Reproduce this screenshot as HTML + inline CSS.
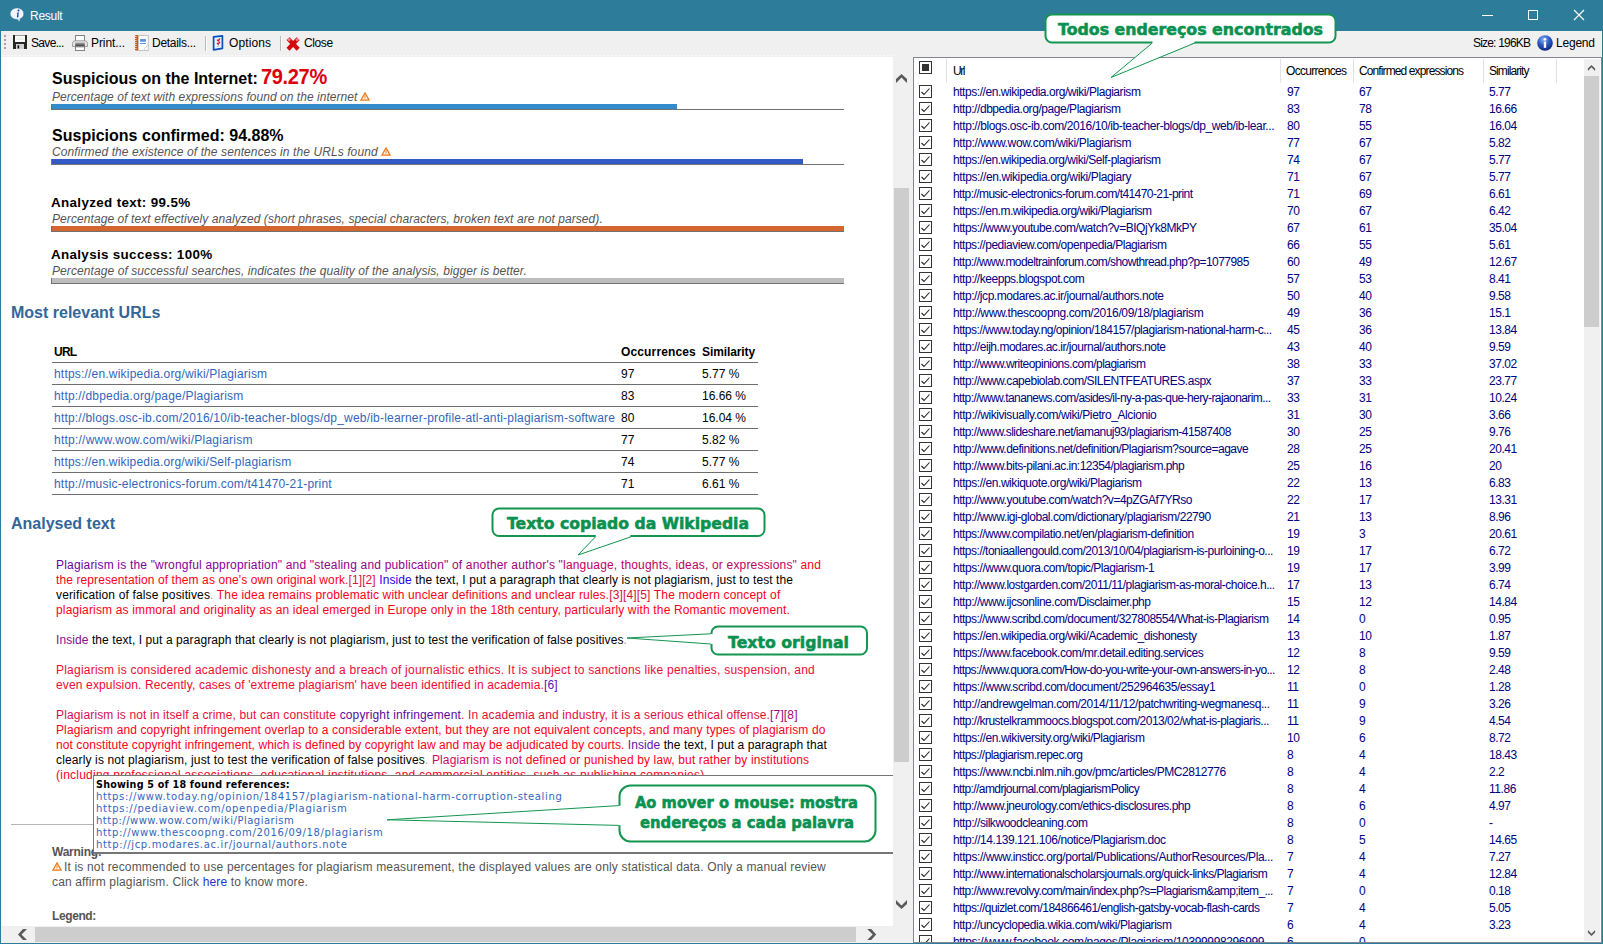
<!DOCTYPE html>
<html lang="en"><head><meta charset="utf-8"><title>Result</title>
<style>
html,body{margin:0;padding:0;background:#F0F0F0;}
body{width:1603px;height:944px;overflow:hidden;font-family:"Liberation Sans",sans-serif;}
#win{position:relative;width:1603px;height:944px;background:#F0F0F0;overflow:hidden;}
#win div,#win span{box-sizing:border-box;}
.abs{position:absolute;}
/* title bar */
#title{position:absolute;left:0;top:0;width:1603px;height:31px;background:#2D7D9A;}
#title .cap{position:absolute;left:30px;top:8px;font-size:12px;line-height:16px;color:#fff;white-space:nowrap;}
#bl{position:absolute;left:0;top:31px;width:1px;height:913px;background:#2D7D9A;}
#br{position:absolute;left:1602px;top:31px;width:1px;height:913px;background:#2D7D9A;}
#bb{position:absolute;left:0;top:943px;width:1603px;height:1px;background:#2D7D9A;}
/* toolbar */
#tb{position:absolute;left:1px;top:31px;width:1601px;height:26px;background:#F0F0F0;}
#tb .tx{position:absolute;top:4px;font-size:12px;line-height:16px;color:#000;white-space:nowrap;}
#tb .sep{position:absolute;top:5px;width:1px;height:15px;background:#B9B9B9;box-shadow:1px 1px 0 #FCFCFC;}
#tb svg{position:absolute;}
/* left panel */
#lp{position:absolute;left:1px;top:57px;width:892px;height:869px;background:#fff;overflow:hidden;}
#lp .t{position:absolute;white-space:nowrap;}
.h1{font-weight:bold;font-size:16px;line-height:20px;color:#000;}
.h2{font-weight:bold;font-size:13.4px;line-height:18px;color:#000;}
.sub{font-style:italic;font-size:12px;line-height:14px;color:#555;}
.bar{position:absolute;left:50px;width:793px;height:6px;border-left:1px solid #727272;border-bottom:1px solid #727272;}
.bar i{display:block;height:5px;}
.sec{font-weight:bold;font-size:16px;line-height:20px;color:#336699;}
#ut{position:absolute;left:51px;top:284px;width:706px;}
#ut .row{position:absolute;left:0;width:706px;height:22px;border-bottom:1px solid #6E6E6E;font-size:12px;line-height:14px;white-space:nowrap;}
#ut .row > span{position:absolute;top:4px;}
#ut .hd{font-weight:bold;}
#ut .lk{color:#3366BB;}
.p{position:absolute;left:55px;font-size:12px;line-height:15px;white-space:nowrap;color:#000;}
.p div{height:15px;}
.warn{color:#555;font-size:12px;line-height:15px;}
/* scrollbars */
#vsb{position:absolute;left:893px;top:57px;width:20px;height:869px;background:#F0F0F0;}
#vsb .th{position:absolute;left:1px;top:131px;width:15px;height:574px;background:#CDCDCD;}
#hsb{position:absolute;left:1px;top:926px;width:892px;height:17px;background:#F0F0F0;}
#hsb .th{position:absolute;left:34px;top:1px;width:821px;height:15px;background:#CDCDCD;}
#corner{position:absolute;left:893px;top:926px;width:20px;height:17px;background:#F0F0F0;}
/* tooltip */
#tip{position:absolute;left:92px;top:718px;width:800px;height:79px;background:#fff;border-top:1px solid #767676;border-left:1px solid #767676;border-bottom:2px solid #767676;font-family:"DejaVu Sans","Liberation Sans",sans-serif;font-size:10px;line-height:12px;white-space:nowrap;}
#tip div{position:absolute;left:2px;}
#tip .b{font-weight:bold;color:#000;font-size:9.6px;}
#tip .l{color:#3366BB;}
/* right panel */
#rp{position:absolute;left:913px;top:57px;width:689px;height:886px;background:#fff;border:1px solid #828790;overflow:hidden;font-size:12px;}
#rhead{position:absolute;left:0;top:0;width:671px;height:25px;}
#rhead .hcb{position:absolute;left:5px;top:3px;width:13px;height:13px;border:1px solid #333;background:#fff;}
#rhead .hcb i{position:absolute;left:2px;top:2px;width:7px;height:7px;background:#333;}
#rhead .hs{position:absolute;top:1px;width:1px;height:24px;background:#E2E2E2;}
#rhead .ht{position:absolute;top:6px;line-height:14px;color:#000;white-space:nowrap;letter-spacing:-0.45px;}
#rows{position:absolute;left:0;top:25px;width:671px;}
.r{position:relative;height:17px;line-height:17px;white-space:nowrap;color:#000080;letter-spacing:-0.45px;}
.r > span{position:absolute;top:1px;}
.r .cb{left:5px;top:2px;width:13px;height:13px;border:1px solid #333;background:#fff;}
.r .cb svg{position:absolute;left:-1px;top:-1px;}
.r .u{left:39px;}
.r .a{left:373px;}
.r .b{left:445px;}
.r .c{left:575px;}
#rsb{position:absolute;left:670px;top:1px;width:16px;height:882px;background:#F0F0F0;}
#rthumb{position:absolute;left:0;top:17px;width:15px;height:251px;background:#CDCDCD;}
#rsb svg{position:absolute;left:0;top:0;}
/* callouts */
.co{position:absolute;left:0;top:0;}
.cot{position:absolute;font-family:"DejaVu Sans","Liberation Sans",sans-serif;font-weight:bold;color:#0A9150;white-space:nowrap;text-align:center;}

</style></head>
<body>
<div id="win">
<div id="title">
<svg class="abs" style="left:9px;top:7px" width="16" height="16" viewBox="0 0 16 16"><path d="M7.5 11.6 L10.4 14.6 L11.4 10.4 Z" fill="#E2EEF9"/><ellipse cx="8" cy="6.7" rx="6.7" ry="5.6" fill="#EEF5FC" stroke="#3A6FA8" stroke-width="0.5" stroke-dasharray="1 1"/><circle cx="9.5" cy="3.5" r="0.95" fill="#1038B0"/><path d="M7.6 5.9 L9.7 5.2 L9.3 10.2 L7.9 10.5 L8.4 6.6 Z" fill="#1038B0"/></svg>
<div class="cap"><span style="letter-spacing:-0.283px">Result</span></div>
<svg class="abs" style="left:1472px;top:0" width="131" height="31" viewBox="0 0 131 31"><path d="M10 15.5 H21" stroke="#fff" stroke-width="1"/><rect x="56.5" y="10.5" width="9" height="9" fill="none" stroke="#fff" stroke-width="1"/><path d="M102 10 L112 20 M112 10 L102 20" stroke="#fff" stroke-width="1.1"/></svg>
</div>
<div id="bl"></div><div id="br"></div>
<div id="tb">
<div class="abs" style="left:0;top:24px;width:892px;height:1px;background:repeating-linear-gradient(90deg,#F0F0F0 0,#F0F0F0 2px,#FAFAFA 2px,#FAFAFA 4px)"></div>
<svg style="left:3px;top:4px" width="3" height="15" viewBox="0 0 3 15"><rect x="0" y="0" width="2" height="2" fill="#A4A4A4"/><rect x="0" y="4" width="2" height="2" fill="#A4A4A4"/><rect x="0" y="8" width="2" height="2" fill="#A4A4A4"/><rect x="0" y="12" width="2" height="2" fill="#A4A4A4"/></svg>
<svg style="left:12px;top:4px" width="14" height="14" viewBox="0 0 14 14"><rect x="0" y="0" width="14" height="14" fill="#262626"/><rect x="2" y="0" width="10" height="1" fill="#9C9C9C"/><rect x="2" y="1" width="10" height="6" fill="#F7FAF7"/><rect x="3.5" y="3.5" width="7" height="1" fill="#DCE8DC"/><rect x="3" y="9" width="8" height="5" fill="#D2D2D2"/><rect x="4.5" y="10.3" width="1.7" height="3.2" fill="#111"/></svg>
<div class="tx" style="left:30px"><span style="letter-spacing:-0.677px">Save...</span></div>
<svg style="left:71px;top:4px" width="16" height="16" viewBox="0 0 16 16"><defs><linearGradient id="pg" x1="0" y1="0" x2="0" y2="1"><stop offset="0" stop-color="#B8B8B8"/><stop offset="0.5" stop-color="#707070"/><stop offset="1" stop-color="#3C3C3C"/></linearGradient></defs><rect x="3.5" y="0.5" width="9" height="6.5" fill="#FBFBFB" stroke="#828282" stroke-width="1"/><path d="M2.5 5.8 H13.5 Q15.5 6.2 15.5 8.5 V11.5 H0.5 V8.5 Q0.5 6.2 2.5 5.8 Z" fill="#E6E6E6" stroke="#8C8C8C" stroke-width="0.8"/><rect x="3.2" y="7.4" width="9.6" height="4" fill="url(#pg)"/><rect x="3.5" y="11.8" width="9" height="3.7" fill="#FDFDFD" stroke="#828282" stroke-width="1"/></svg>
<div class="tx" style="left:90px"><span style="letter-spacing:-0.070px">Print...</span></div>
<svg style="left:132px;top:4px" width="16" height="16" viewBox="0 0 16 16"><rect x="5" y="0.5" width="10.3" height="15" fill="#fff" stroke="#C2C2C2" stroke-width="1"/><path d="M15.3 9 L10.5 15.5" stroke="#CDCDCD" stroke-width="1"/><rect x="2" y="0" width="3.2" height="15.6" rx="0.8" fill="#C2571F"/><path d="M0.6 1.5 H3.6 M0.6 3.5 H3.6 M0.6 5.5 H3.6 M0.6 7.5 H3.6 M0.6 9.5 H3.6 M0.6 11.5 H3.6 M0.6 13.5 H3.6" stroke="#EBE3DC" stroke-width="0.9"/><rect x="7" y="4" width="6" height="2.8" rx="0.5" fill="#5B96E0"/><rect x="7" y="8" width="6" height="1" fill="#5B96E0"/></svg>
<div class="tx" style="left:151px"><span style="letter-spacing:-0.288px">Details...</span></div>
<div class="sep" style="left:204px"></div>
<svg style="left:211px;top:4px" width="12" height="16" viewBox="0 0 12 16"><path d="M1.6 1.9 L10.4 0.9 L10.4 13.4 L1.6 14.9 Z" fill="#EAF5FF" stroke="#0F4CBC" stroke-width="1.7" stroke-linejoin="round"/><path d="M4.9 4.6 L6.2 5.9 L8 3.3 M4.9 7.9 L6.2 9.2 L8 6.6" fill="none" stroke="#D41034" stroke-width="1.3"/><path d="M5 11.4 L7.6 10.9" stroke="#9FB8D8" stroke-width="1"/></svg>
<div class="tx" style="left:228px"><span style="letter-spacing:0.107px">Options</span></div>
<div class="sep" style="left:279px"></div>
<svg style="left:284px;top:5px" width="16" height="16" viewBox="0 0 16 16"><path d="M3 2.6 L13.2 13.2 M13.2 2.6 L3 13.2" stroke="#D40A0A" stroke-width="4.2" stroke-linecap="butt"/><path d="M3 2.6 L5 4.6 M13.2 2.6 L11.2 4.6" stroke="#F08A96" stroke-width="2.4"/></svg>
<div class="tx" style="left:303px"><span style="letter-spacing:-0.397px">Close</span></div>
<div class="tx" style="left:1472px"><span style="letter-spacing:-0.805px">Size: 196KB</span></div>
<svg style="left:1536px;top:4px" width="16" height="16" viewBox="0 0 16 16"><defs><radialGradient id="ig" cx="0.42" cy="0.28" r="0.8"><stop offset="0" stop-color="#8FB4F4"/><stop offset="0.45" stop-color="#2C5CC8"/><stop offset="1" stop-color="#061C6C"/></radialGradient></defs><circle cx="8" cy="8" r="7.8" fill="url(#ig)"/><circle cx="8" cy="4.3" r="1.35" fill="#fff"/><rect x="6.8" y="6.6" width="2.4" height="6.2" fill="#fff"/></svg>
<div class="tx" style="left:1555px"><span style="letter-spacing:-0.209px">Legend</span></div>
</div>

<div id="lp">
<div class="t h1" style="left:51px;top:12px"><span style="letter-spacing:-0.017px">Suspicious on the Internet:</span></div>
<div class="t h1" style="left:260px;top:8px;font-size:20px;line-height:24px;color:#DD0011;transform:scaleY(1.07);transform-origin:0 19px"><span style="letter-spacing:-0.329px">79.27%</span></div>
<div class="t sub" style="left:51px;top:33px"><span style="letter-spacing:0.045px">Percentage of text with expressions found on the internet</span><svg width="10" height="9" viewBox="0 0 11 10" style="vertical-align:0px;margin-left:3px"><path d="M5.5 1 L10 9 H1 Z" fill="#FFF4E0" stroke="#F07818" stroke-width="1.3"/><rect x="5" y="3.6" width="1" height="3" fill="#F07818"/><rect x="5" y="7.2" width="1" height="1" fill="#F07818"/></svg></div>
<div class="bar" style="top:47px"><i style="width:625px;background:#338ACC"></i></div>
<div class="t h1" style="left:51px;top:69px"><span style="letter-spacing:0.015px">Suspicions confirmed: 94.88%</span></div>
<div class="t sub" style="left:51px;top:88px"><span style="letter-spacing:0.095px">Confirmed the existence of the sentences in the URLs found</span><svg width="10" height="9" viewBox="0 0 11 10" style="vertical-align:0px;margin-left:3px"><path d="M5.5 1 L10 9 H1 Z" fill="#FFF4E0" stroke="#F07818" stroke-width="1.3"/><rect x="5" y="3.6" width="1" height="3" fill="#F07818"/><rect x="5" y="7.2" width="1" height="1" fill="#F07818"/></svg></div>
<div class="bar" style="top:102px"><i style="width:751px;background:#3359C8"></i></div>
<div class="t h2" style="left:50px;top:137px"><span style="letter-spacing:0.349px">Analyzed text: 99.5%</span></div>
<div class="t sub" style="left:51px;top:155px"><span style="letter-spacing:0.076px">Percentage of text effectively analyzed (short phrases, special characters, broken text are not parsed).</span></div>
<div class="bar" style="top:169px"><i style="width:792px;background:#D4652F"></i></div>
<div class="t h2" style="left:50px;top:189px"><span style="letter-spacing:0.334px">Analysis success: 100%</span></div>
<div class="t sub" style="left:51px;top:207px"><span style="letter-spacing:0.085px">Percentage of successful searches, indicates the quality of the analysis, bigger is better.</span></div>
<div class="bar" style="top:221px"><i style="width:792px;background:#BDBDBD"></i></div>
<div class="t sec" style="left:10px;top:246px">Most relevant URLs</div>
<div id="ut">
<div class="row hd" style="top:0"><span style="left:2px"><span style="letter-spacing:-0.736px">URL</span></span><span style="left:569px"><span style="letter-spacing:0.141px">Occurrences</span></span><span style="left:650px"><span style="letter-spacing:-0.103px">Similarity</span></span></div>
<div class="row" style="top:22px"><span class="lk" style="left:2px"><span style="letter-spacing:0.197px">https://en.wikipedia.org/wiki/Plagiarism</span></span><span style="left:569px">97</span><span style="left:650px">5.77 %</span></div>
<div class="row" style="top:44px"><span class="lk" style="left:2px"><span style="letter-spacing:0.197px">http://dbpedia.org/page/Plagiarism</span></span><span style="left:569px">83</span><span style="left:650px">16.66 %</span></div>
<div class="row" style="top:66px"><span class="lk" style="left:2px"><span style="letter-spacing:0.203px">http://blogs.osc-ib.com/2016/10/ib-teacher-blogs/dp_web/ib-learner-profile-atl-anti-plagiarism-software</span></span><span style="left:569px">80</span><span style="left:650px">16.04 %</span></div>
<div class="row" style="top:88px"><span class="lk" style="left:2px"><span style="letter-spacing:0.233px">http://www.wow.com/wiki/Plagiarism</span></span><span style="left:569px">77</span><span style="left:650px">5.82 %</span></div>
<div class="row" style="top:110px"><span class="lk" style="left:2px"><span style="letter-spacing:0.192px">https://en.wikipedia.org/wiki/Self-plagiarism</span></span><span style="left:569px">74</span><span style="left:650px">5.77 %</span></div>
<div class="row" style="top:132px"><span class="lk" style="left:2px"><span style="letter-spacing:0.194px">http://music-electronics-forum.com/t41470-21-print</span></span><span style="left:569px">71</span><span style="left:650px">6.61 %</span></div>
</div>
<div class="t sec" style="left:10px;top:457px">Analysed text</div>
<div class="p" style="top:501px">
<div><span style="letter-spacing:0.180px"><span style="color:#7200A4">Plagiarism</span> <span style="color:#7E00A0">is the</span> <span style="color:#8A0096">"wrongful appropriation"</span> <span style="color:#96008A">and "stealing and publication"</span> <span style="color:#A2007C">of another author's</span> <span style="color:#BE0060">"language, thoughts, ideas, or expressions"</span> <span style="color:#FF0018">and</span></span></div>
<div><span style="letter-spacing:0.100px"><span style="color:#FF0018">the representation of them as one's own original work.</span><span style="color:#D8143C">[1][2]</span> <span style="color:#2A00EE">Inside</span> the text, I put a paragraph that clearly is not plagiarism, just to test the</span></div>
<div><span style="letter-spacing:0.150px">verification of false positives<span style="color:#D08888">.</span> <span style="color:#FF0018">The idea remains problematic with unclear definitions and unclear rules.</span><span style="color:#D0143C">[3][4][5]</span> <span style="color:#FF0018">The modern concept of</span></span></div>
<div><span style="letter-spacing:0.154px"><span style="color:#FF0018">plagiarism as immoral and originality as an ideal emerged in Europe only in the 18th century, particularly with the Romantic movement.</span></span></div>
</div>
<div class="p" style="top:576px">
<div><span style="letter-spacing:0.080px"><span style="color:#8A0A8A">Inside</span> the text, I put a paragraph that clearly is not plagiarism, just to test the verification of false positives<span style="color:#D08888">.</span></span></div>
</div>
<div class="p" style="top:606px">
<div><span style="letter-spacing:0.223px"><span style="color:#EE0C34">Plagiarism is considered academic dishonesty and a breach of journalistic ethics. It is subject to sanctions like penalties, suspension, and</span></span></div>
<div><span style="letter-spacing:0.142px"><span style="color:#F00830">even expulsion. Recently, cases of 'extreme plagiarism' have been identified in academia.</span><span style="color:#5A10B4">[6]</span></span></div>
</div>
<div class="p" style="top:651px">
<div><span style="letter-spacing:0.146px"><span style="color:#D21050">Plagiarism is</span> <span style="color:#EC0C38">not in itself a crime, but can constitute</span> <span style="color:#5A0AA0">copyright infringement</span><span style="color:#E0103C">. In academia and industry, it is a serious ethical offense.</span><span style="color:#9A0A78">[7][8]</span></span></div>
<div><span style="letter-spacing:0.116px"><span style="color:#FF0018">Plagiarism and copyright infringement overlap to a considerable extent, but they are not equivalent concepts, and many types of plagiarism do</span></span></div>
<div><span style="letter-spacing:0.076px"><span style="color:#FF0018">not constitute copyright infringement, which is defined by copyright law and may be adjudicated by courts.</span> <span style="color:#6A10B0">Inside</span> the text, I put a paragraph that</span></div>
<div><span style="letter-spacing:0.135px">clearly is not plagiarism, just to test the verification of false positives<span style="color:#D08888">.</span> <span style="color:#CC0A66">Plagiarism is not</span> <span style="color:#FF0018">defined or punished by law, but rather by institutions</span></span></div>
<div><span style="letter-spacing:0.238px"><span style="color:#FF0018">(including professional associations, educational institutions, and commercial entities, such as publishing companies).</span></span></div>
</div>
<div class="abs" style="left:10px;top:767px;width:840px;height:1px;background:#B4B4B4"></div>
<div class="t warn" style="left:51px;top:788px;font-weight:bold"><span style="letter-spacing:-0.250px">Warning:</span></div>
<div class="t warn" style="left:51px;top:803px"><svg width="10" height="9" viewBox="0 0 11 10" style="vertical-align:0px"><path d="M5.5 1 L10 9 H1 Z" fill="#FFF4E0" stroke="#F07818" stroke-width="1.3"/><rect x="5" y="3.6" width="1" height="3" fill="#F07818"/><rect x="5" y="7.2" width="1" height="1" fill="#F07818"/></svg><span style="position:absolute;left:12px;top:0"><span style="letter-spacing:0.167px">It is not recommended to use percentages for plagiarism measurement, the displayed values are only statistical data. Only a manual review</span></span></div>
<div class="t warn" style="left:51px;top:818px"><span style="letter-spacing:0.143px">can affirm plagiarism. Click <span style="color:#2233CC">here</span> to know more.</span></div>
<div class="t warn" style="left:51px;top:852px;font-weight:bold"><span style="letter-spacing:-0.395px">Legend:</span></div>
<div id="tip">
<div class="b" style="top:3px"><span style="letter-spacing:0.219px">Showing 5 of 18 found references:</span></div>
<div class="l" style="top:15px"><span style="letter-spacing:0.640px">https://www.today.ng/opinion/184157/plagiarism-national-harm-corruption-stealing</span></div>
<div class="l" style="top:27px"><span style="letter-spacing:0.709px">https://pediaview.com/openpedia/Plagiarism</span></div>
<div class="l" style="top:39px"><span style="letter-spacing:0.484px">http://www.wow.com/wiki/Plagiarism</span></div>
<div class="l" style="top:51px"><span style="letter-spacing:0.644px">http://www.thescoopng.com/2016/09/18/plagiarism</span></div>
<div class="l" style="top:63px"><span style="letter-spacing:0.656px">http://jcp.modares.ac.ir/journal/authors.note</span></div>
</div>
</div>
<div id="vsb"><div class="th"></div><svg class="abs" style="left:0;top:0" width="20" height="869" viewBox="0 0 20 869"><path d="M8.5 17 L14 22 L14 26 L8.5 20.5 L3 26 L3 22 Z M8.5 852 L14 847 L14 843 L8.5 848.5 L3 843 L3 847 Z" fill="#5A5A5A"/></svg></div>
<div id="hsb"><div class="th"></div><svg class="abs" style="left:0;top:0" width="892" height="17" viewBox="0 0 892 17"><path d="M17 8.5 L22 3 L26 3 L20.5 8.5 L26 14 L22 14 Z M875.2 8.5 L870.2 3 L866.2 3 L871.7 8.5 L866.2 14 L870.2 14 Z" fill="#5A5A5A"/></svg></div>
<div id="corner"></div>

<div id="rp">
<div id="rhead"><span class="hcb"><i></i></span><span class="hs" style="left:32px"></span><span class="hs" style="left:366px"></span><span class="hs" style="left:439px"></span><span class="hs" style="left:569px"></span><span class="hs" style="left:642px"></span><span class="ht" style="left:39px"><span style="letter-spacing:-1.414px">Url</span></span><span class="ht" style="left:372px"><span style="letter-spacing:-0.703px">Occurrences</span></span><span class="ht" style="left:445px"><span style="letter-spacing:-0.886px">Confirmed expressions</span></span><span class="ht" style="left:575px"><span style="letter-spacing:-0.919px">Similarity</span></span></div>
<div id="rows">
<div class="r"><span class="cb"><svg viewBox="0 0 13 13" width="13" height="13"><path d="M2.5 7 L5 9.5 L10.5 3.5" fill="none" stroke="#222" stroke-width="1.1"/></svg></span><span class="u"><span style="letter-spacing:-0.449px">https://en.wikipedia.org/wiki/Plagiarism</span></span><span class="a">97</span><span class="b">67</span><span class="c">5.77</span></div>
<div class="r"><span class="cb"><svg viewBox="0 0 13 13" width="13" height="13"><path d="M2.5 7 L5 9.5 L10.5 3.5" fill="none" stroke="#222" stroke-width="1.1"/></svg></span><span class="u"><span style="letter-spacing:-0.445px">http://dbpedia.org/page/Plagiarism</span></span><span class="a">83</span><span class="b">78</span><span class="c">16.66</span></div>
<div class="r"><span class="cb"><svg viewBox="0 0 13 13" width="13" height="13"><path d="M2.5 7 L5 9.5 L10.5 3.5" fill="none" stroke="#222" stroke-width="1.1"/></svg></span><span class="u"><span style="letter-spacing:-0.400px">http://blogs.osc-ib.com/2016/10/ib-teacher-blogs/dp_web/ib-lear...</span></span><span class="a">80</span><span class="b">55</span><span class="c">16.04</span></div>
<div class="r"><span class="cb"><svg viewBox="0 0 13 13" width="13" height="13"><path d="M2.5 7 L5 9.5 L10.5 3.5" fill="none" stroke="#222" stroke-width="1.1"/></svg></span><span class="u"><span style="letter-spacing:-0.373px">http://www.wow.com/wiki/Plagiarism</span></span><span class="a">77</span><span class="b">67</span><span class="c">5.82</span></div>
<div class="r"><span class="cb"><svg viewBox="0 0 13 13" width="13" height="13"><path d="M2.5 7 L5 9.5 L10.5 3.5" fill="none" stroke="#222" stroke-width="1.1"/></svg></span><span class="u"><span style="letter-spacing:-0.470px">https://en.wikipedia.org/wiki/Self-plagiarism</span></span><span class="a">74</span><span class="b">67</span><span class="c">5.77</span></div>
<div class="r"><span class="cb"><svg viewBox="0 0 13 13" width="13" height="13"><path d="M2.5 7 L5 9.5 L10.5 3.5" fill="none" stroke="#222" stroke-width="1.1"/></svg></span><span class="u"><span style="letter-spacing:-0.388px">https://en.wikipedia.org/wiki/Plagiary</span></span><span class="a">71</span><span class="b">67</span><span class="c">5.77</span></div>
<div class="r"><span class="cb"><svg viewBox="0 0 13 13" width="13" height="13"><path d="M2.5 7 L5 9.5 L10.5 3.5" fill="none" stroke="#222" stroke-width="1.1"/></svg></span><span class="u"><span style="letter-spacing:-0.574px">http://music-electronics-forum.com/t41470-21-print</span></span><span class="a">71</span><span class="b">69</span><span class="c">6.61</span></div>
<div class="r"><span class="cb"><svg viewBox="0 0 13 13" width="13" height="13"><path d="M2.5 7 L5 9.5 L10.5 3.5" fill="none" stroke="#222" stroke-width="1.1"/></svg></span><span class="u"><span style="letter-spacing:-0.479px">https://en.m.wikipedia.org/wiki/Plagiarism</span></span><span class="a">70</span><span class="b">67</span><span class="c">6.42</span></div>
<div class="r"><span class="cb"><svg viewBox="0 0 13 13" width="13" height="13"><path d="M2.5 7 L5 9.5 L10.5 3.5" fill="none" stroke="#222" stroke-width="1.1"/></svg></span><span class="u"><span style="letter-spacing:-0.471px">https://www.youtube.com/watch?v=BIQjYk8MkPY</span></span><span class="a">67</span><span class="b">61</span><span class="c">35.04</span></div>
<div class="r"><span class="cb"><svg viewBox="0 0 13 13" width="13" height="13"><path d="M2.5 7 L5 9.5 L10.5 3.5" fill="none" stroke="#222" stroke-width="1.1"/></svg></span><span class="u"><span style="letter-spacing:-0.477px">https://pediaview.com/openpedia/Plagiarism</span></span><span class="a">66</span><span class="b">55</span><span class="c">5.61</span></div>
<div class="r"><span class="cb"><svg viewBox="0 0 13 13" width="13" height="13"><path d="M2.5 7 L5 9.5 L10.5 3.5" fill="none" stroke="#222" stroke-width="1.1"/></svg></span><span class="u"><span style="letter-spacing:-0.572px">http://www.modeltrainforum.com/showthread.php?p=1077985</span></span><span class="a">60</span><span class="b">49</span><span class="c">12.67</span></div>
<div class="r"><span class="cb"><svg viewBox="0 0 13 13" width="13" height="13"><path d="M2.5 7 L5 9.5 L10.5 3.5" fill="none" stroke="#222" stroke-width="1.1"/></svg></span><span class="u"><span style="letter-spacing:-0.469px">http://keepps.blogspot.com</span></span><span class="a">57</span><span class="b">53</span><span class="c">8.41</span></div>
<div class="r"><span class="cb"><svg viewBox="0 0 13 13" width="13" height="13"><path d="M2.5 7 L5 9.5 L10.5 3.5" fill="none" stroke="#222" stroke-width="1.1"/></svg></span><span class="u"><span style="letter-spacing:-0.450px">http://jcp.modares.ac.ir/journal/authors.note</span></span><span class="a">50</span><span class="b">40</span><span class="c">9.58</span></div>
<div class="r"><span class="cb"><svg viewBox="0 0 13 13" width="13" height="13"><path d="M2.5 7 L5 9.5 L10.5 3.5" fill="none" stroke="#222" stroke-width="1.1"/></svg></span><span class="u"><span style="letter-spacing:-0.379px">http://www.thescoopng.com/2016/09/18/plagiarism</span></span><span class="a">49</span><span class="b">36</span><span class="c">15.1</span></div>
<div class="r"><span class="cb"><svg viewBox="0 0 13 13" width="13" height="13"><path d="M2.5 7 L5 9.5 L10.5 3.5" fill="none" stroke="#222" stroke-width="1.1"/></svg></span><span class="u"><span style="letter-spacing:-0.491px">https://www.today.ng/opinion/184157/plagiarism-national-harm-c...</span></span><span class="a">45</span><span class="b">36</span><span class="c">13.84</span></div>
<div class="r"><span class="cb"><svg viewBox="0 0 13 13" width="13" height="13"><path d="M2.5 7 L5 9.5 L10.5 3.5" fill="none" stroke="#222" stroke-width="1.1"/></svg></span><span class="u"><span style="letter-spacing:-0.470px">http://eijh.modares.ac.ir/journal/authors.note</span></span><span class="a">43</span><span class="b">40</span><span class="c">9.59</span></div>
<div class="r"><span class="cb"><svg viewBox="0 0 13 13" width="13" height="13"><path d="M2.5 7 L5 9.5 L10.5 3.5" fill="none" stroke="#222" stroke-width="1.1"/></svg></span><span class="u"><span style="letter-spacing:-0.520px">http://www.writeopinions.com/plagiarism</span></span><span class="a">38</span><span class="b">33</span><span class="c">37.02</span></div>
<div class="r"><span class="cb"><svg viewBox="0 0 13 13" width="13" height="13"><path d="M2.5 7 L5 9.5 L10.5 3.5" fill="none" stroke="#222" stroke-width="1.1"/></svg></span><span class="u"><span style="letter-spacing:-0.484px">http://www.capebiolab.com/SILENTFEATURES.aspx</span></span><span class="a">37</span><span class="b">33</span><span class="c">23.77</span></div>
<div class="r"><span class="cb"><svg viewBox="0 0 13 13" width="13" height="13"><path d="M2.5 7 L5 9.5 L10.5 3.5" fill="none" stroke="#222" stroke-width="1.1"/></svg></span><span class="u"><span style="letter-spacing:-0.584px">http://www.tananews.com/asides/il-ny-a-pas-que-hery-rajaonarim...</span></span><span class="a">33</span><span class="b">31</span><span class="c">10.24</span></div>
<div class="r"><span class="cb"><svg viewBox="0 0 13 13" width="13" height="13"><path d="M2.5 7 L5 9.5 L10.5 3.5" fill="none" stroke="#222" stroke-width="1.1"/></svg></span><span class="u"><span style="letter-spacing:-0.409px">http://wikivisually.com/wiki/Pietro_Alcionio</span></span><span class="a">31</span><span class="b">30</span><span class="c">3.66</span></div>
<div class="r"><span class="cb"><svg viewBox="0 0 13 13" width="13" height="13"><path d="M2.5 7 L5 9.5 L10.5 3.5" fill="none" stroke="#222" stroke-width="1.1"/></svg></span><span class="u"><span style="letter-spacing:-0.539px">http://www.slideshare.net/iamanuj93/plagiarism-41587408</span></span><span class="a">30</span><span class="b">25</span><span class="c">9.76</span></div>
<div class="r"><span class="cb"><svg viewBox="0 0 13 13" width="13" height="13"><path d="M2.5 7 L5 9.5 L10.5 3.5" fill="none" stroke="#222" stroke-width="1.1"/></svg></span><span class="u"><span style="letter-spacing:-0.503px">http://www.definitions.net/definition/Plagiarism?source=agave</span></span><span class="a">28</span><span class="b">25</span><span class="c">20.41</span></div>
<div class="r"><span class="cb"><svg viewBox="0 0 13 13" width="13" height="13"><path d="M2.5 7 L5 9.5 L10.5 3.5" fill="none" stroke="#222" stroke-width="1.1"/></svg></span><span class="u"><span style="letter-spacing:-0.509px">http://www.bits-pilani.ac.in:12354/plagiarism.php</span></span><span class="a">25</span><span class="b">16</span><span class="c">20</span></div>
<div class="r"><span class="cb"><svg viewBox="0 0 13 13" width="13" height="13"><path d="M2.5 7 L5 9.5 L10.5 3.5" fill="none" stroke="#222" stroke-width="1.1"/></svg></span><span class="u"><span style="letter-spacing:-0.438px">https://en.wikiquote.org/wiki/Plagiarism</span></span><span class="a">22</span><span class="b">13</span><span class="c">6.83</span></div>
<div class="r"><span class="cb"><svg viewBox="0 0 13 13" width="13" height="13"><path d="M2.5 7 L5 9.5 L10.5 3.5" fill="none" stroke="#222" stroke-width="1.1"/></svg></span><span class="u"><span style="letter-spacing:-0.479px">http://www.youtube.com/watch?v=4pZGAf7YRso</span></span><span class="a">22</span><span class="b">17</span><span class="c">13.31</span></div>
<div class="r"><span class="cb"><svg viewBox="0 0 13 13" width="13" height="13"><path d="M2.5 7 L5 9.5 L10.5 3.5" fill="none" stroke="#222" stroke-width="1.1"/></svg></span><span class="u"><span style="letter-spacing:-0.460px">http://www.igi-global.com/dictionary/plagiarism/22790</span></span><span class="a">21</span><span class="b">13</span><span class="c">8.96</span></div>
<div class="r"><span class="cb"><svg viewBox="0 0 13 13" width="13" height="13"><path d="M2.5 7 L5 9.5 L10.5 3.5" fill="none" stroke="#222" stroke-width="1.1"/></svg></span><span class="u"><span style="letter-spacing:-0.487px">https://www.compilatio.net/en/plagiarism-definition</span></span><span class="a">19</span><span class="b">3</span><span class="c">20.61</span></div>
<div class="r"><span class="cb"><svg viewBox="0 0 13 13" width="13" height="13"><path d="M2.5 7 L5 9.5 L10.5 3.5" fill="none" stroke="#222" stroke-width="1.1"/></svg></span><span class="u"><span style="letter-spacing:-0.495px">https://toniaallengould.com/2013/10/04/plagiarism-is-purloining-o...</span></span><span class="a">19</span><span class="b">17</span><span class="c">6.72</span></div>
<div class="r"><span class="cb"><svg viewBox="0 0 13 13" width="13" height="13"><path d="M2.5 7 L5 9.5 L10.5 3.5" fill="none" stroke="#222" stroke-width="1.1"/></svg></span><span class="u"><span style="letter-spacing:-0.469px">https://www.quora.com/topic/Plagiarism-1</span></span><span class="a">19</span><span class="b">17</span><span class="c">3.99</span></div>
<div class="r"><span class="cb"><svg viewBox="0 0 13 13" width="13" height="13"><path d="M2.5 7 L5 9.5 L10.5 3.5" fill="none" stroke="#222" stroke-width="1.1"/></svg></span><span class="u"><span style="letter-spacing:-0.482px">http://www.lostgarden.com/2011/11/plagiarism-as-moral-choice.h...</span></span><span class="a">17</span><span class="b">13</span><span class="c">6.74</span></div>
<div class="r"><span class="cb"><svg viewBox="0 0 13 13" width="13" height="13"><path d="M2.5 7 L5 9.5 L10.5 3.5" fill="none" stroke="#222" stroke-width="1.1"/></svg></span><span class="u"><span style="letter-spacing:-0.464px">http://www.ijcsonline.com/Disclaimer.php</span></span><span class="a">15</span><span class="b">12</span><span class="c">14.84</span></div>
<div class="r"><span class="cb"><svg viewBox="0 0 13 13" width="13" height="13"><path d="M2.5 7 L5 9.5 L10.5 3.5" fill="none" stroke="#222" stroke-width="1.1"/></svg></span><span class="u"><span style="letter-spacing:-0.513px">https://www.scribd.com/document/327808554/What-is-Plagiarism</span></span><span class="a">14</span><span class="b">0</span><span class="c">0.95</span></div>
<div class="r"><span class="cb"><svg viewBox="0 0 13 13" width="13" height="13"><path d="M2.5 7 L5 9.5 L10.5 3.5" fill="none" stroke="#222" stroke-width="1.1"/></svg></span><span class="u"><span style="letter-spacing:-0.461px">https://en.wikipedia.org/wiki/Academic_dishonesty</span></span><span class="a">13</span><span class="b">10</span><span class="c">1.87</span></div>
<div class="r"><span class="cb"><svg viewBox="0 0 13 13" width="13" height="13"><path d="M2.5 7 L5 9.5 L10.5 3.5" fill="none" stroke="#222" stroke-width="1.1"/></svg></span><span class="u"><span style="letter-spacing:-0.468px">https://www.facebook.com/mr.detail.editing.services</span></span><span class="a">12</span><span class="b">8</span><span class="c">9.59</span></div>
<div class="r"><span class="cb"><svg viewBox="0 0 13 13" width="13" height="13"><path d="M2.5 7 L5 9.5 L10.5 3.5" fill="none" stroke="#222" stroke-width="1.1"/></svg></span><span class="u"><span style="letter-spacing:-0.612px">https://www.quora.com/How-do-you-write-your-own-answers-in-yo...</span></span><span class="a">12</span><span class="b">8</span><span class="c">2.48</span></div>
<div class="r"><span class="cb"><svg viewBox="0 0 13 13" width="13" height="13"><path d="M2.5 7 L5 9.5 L10.5 3.5" fill="none" stroke="#222" stroke-width="1.1"/></svg></span><span class="u"><span style="letter-spacing:-0.445px">https://www.scribd.com/document/252964635/essay1</span></span><span class="a">11</span><span class="b">0</span><span class="c">1.28</span></div>
<div class="r"><span class="cb"><svg viewBox="0 0 13 13" width="13" height="13"><path d="M2.5 7 L5 9.5 L10.5 3.5" fill="none" stroke="#222" stroke-width="1.1"/></svg></span><span class="u"><span style="letter-spacing:-0.446px">http://andrewgelman.com/2014/11/12/patchwriting-wegmanesq...</span></span><span class="a">11</span><span class="b">9</span><span class="c">3.26</span></div>
<div class="r"><span class="cb"><svg viewBox="0 0 13 13" width="13" height="13"><path d="M2.5 7 L5 9.5 L10.5 3.5" fill="none" stroke="#222" stroke-width="1.1"/></svg></span><span class="u"><span style="letter-spacing:-0.508px">http://krustelkrammoocs.blogspot.com/2013/02/what-is-plagiaris...</span></span><span class="a">11</span><span class="b">9</span><span class="c">4.54</span></div>
<div class="r"><span class="cb"><svg viewBox="0 0 13 13" width="13" height="13"><path d="M2.5 7 L5 9.5 L10.5 3.5" fill="none" stroke="#222" stroke-width="1.1"/></svg></span><span class="u"><span style="letter-spacing:-0.438px">https://en.wikiversity.org/wiki/Plagiarism</span></span><span class="a">10</span><span class="b">6</span><span class="c">8.72</span></div>
<div class="r"><span class="cb"><svg viewBox="0 0 13 13" width="13" height="13"><path d="M2.5 7 L5 9.5 L10.5 3.5" fill="none" stroke="#222" stroke-width="1.1"/></svg></span><span class="u"><span style="letter-spacing:-0.549px">https://plagiarism.repec.org</span></span><span class="a">8</span><span class="b">4</span><span class="c">18.43</span></div>
<div class="r"><span class="cb"><svg viewBox="0 0 13 13" width="13" height="13"><path d="M2.5 7 L5 9.5 L10.5 3.5" fill="none" stroke="#222" stroke-width="1.1"/></svg></span><span class="u"><span style="letter-spacing:-0.437px">https://www.ncbi.nlm.nih.gov/pmc/articles/PMC2812776</span></span><span class="a">8</span><span class="b">4</span><span class="c">2.2</span></div>
<div class="r"><span class="cb"><svg viewBox="0 0 13 13" width="13" height="13"><path d="M2.5 7 L5 9.5 L10.5 3.5" fill="none" stroke="#222" stroke-width="1.1"/></svg></span><span class="u"><span style="letter-spacing:-0.598px">http://amdrjournal.com/plagiarismPolicy</span></span><span class="a">8</span><span class="b">4</span><span class="c">11.86</span></div>
<div class="r"><span class="cb"><svg viewBox="0 0 13 13" width="13" height="13"><path d="M2.5 7 L5 9.5 L10.5 3.5" fill="none" stroke="#222" stroke-width="1.1"/></svg></span><span class="u"><span style="letter-spacing:-0.501px">http://www.jneurology.com/ethics-disclosures.php</span></span><span class="a">8</span><span class="b">6</span><span class="c">4.97</span></div>
<div class="r"><span class="cb"><svg viewBox="0 0 13 13" width="13" height="13"><path d="M2.5 7 L5 9.5 L10.5 3.5" fill="none" stroke="#222" stroke-width="1.1"/></svg></span><span class="u"><span style="letter-spacing:-0.448px">http://silkwoodcleaning.com</span></span><span class="a">8</span><span class="b">0</span><span class="c">-</span></div>
<div class="r"><span class="cb"><svg viewBox="0 0 13 13" width="13" height="13"><path d="M2.5 7 L5 9.5 L10.5 3.5" fill="none" stroke="#222" stroke-width="1.1"/></svg></span><span class="u"><span style="letter-spacing:-0.424px">http://14.139.121.106/notice/Plagiarism.doc</span></span><span class="a">8</span><span class="b">5</span><span class="c">14.65</span></div>
<div class="r"><span class="cb"><svg viewBox="0 0 13 13" width="13" height="13"><path d="M2.5 7 L5 9.5 L10.5 3.5" fill="none" stroke="#222" stroke-width="1.1"/></svg></span><span class="u"><span style="letter-spacing:-0.407px">https://www.insticc.org/portal/Publications/AuthorResources/Pla...</span></span><span class="a">7</span><span class="b">4</span><span class="c">7.27</span></div>
<div class="r"><span class="cb"><svg viewBox="0 0 13 13" width="13" height="13"><path d="M2.5 7 L5 9.5 L10.5 3.5" fill="none" stroke="#222" stroke-width="1.1"/></svg></span><span class="u"><span style="letter-spacing:-0.537px">http://www.internationalscholarsjournals.org/quick-links/Plagiarism</span></span><span class="a">7</span><span class="b">4</span><span class="c">12.84</span></div>
<div class="r"><span class="cb"><svg viewBox="0 0 13 13" width="13" height="13"><path d="M2.5 7 L5 9.5 L10.5 3.5" fill="none" stroke="#222" stroke-width="1.1"/></svg></span><span class="u"><span style="letter-spacing:-0.578px">http://www.revolvy.com/main/index.php?s=Plagiarism&amp;amp;item_...</span></span><span class="a">7</span><span class="b">0</span><span class="c">0.18</span></div>
<div class="r"><span class="cb"><svg viewBox="0 0 13 13" width="13" height="13"><path d="M2.5 7 L5 9.5 L10.5 3.5" fill="none" stroke="#222" stroke-width="1.1"/></svg></span><span class="u"><span style="letter-spacing:-0.535px">https://quizlet.com/184866461/english-gatsby-vocab-flash-cards</span></span><span class="a">7</span><span class="b">4</span><span class="c">5.05</span></div>
<div class="r"><span class="cb"><svg viewBox="0 0 13 13" width="13" height="13"><path d="M2.5 7 L5 9.5 L10.5 3.5" fill="none" stroke="#222" stroke-width="1.1"/></svg></span><span class="u"><span style="letter-spacing:-0.451px">http://uncyclopedia.wikia.com/wiki/Plagiarism</span></span><span class="a">6</span><span class="b">4</span><span class="c">3.23</span></div>
<div class="r"><span class="cb"><svg viewBox="0 0 13 13" width="13" height="13"><path d="M2.5 7 L5 9.5 L10.5 3.5" fill="none" stroke="#222" stroke-width="1.1"/></svg></span><span class="u"><span style="letter-spacing:-0.365px">https://www.facebook.com/pages/Plagiarism/10399998296999...</span></span><span class="a">6</span><span class="b">0</span><span class="c">-</span></div>
</div>
<div id="rsb"><div id="rthumb"></div><svg width="16" height="882" viewBox="0 0 16 882"><path d="M7.5 6 L11.1 9.6 L11.1 11.9 L7.5 8.3 L3.9 11.9 L3.9 9.6 Z M7.5 877 L11.1 873.4 L11.1 871.1 L7.5 874.7 L3.9 871.1 L3.9 873.4 Z" fill="#5A5A5A"/></svg></div>
</div>
<svg class="co" width="1603" height="944" viewBox="0 0 1603 944">
<g stroke="#129650" stroke-linejoin="round">
<rect x="1045.5" y="14.5" width="290" height="28" rx="6.5" ry="6.5" stroke-width="2" fill="#fff"/>
<path d="M1152.5 40 L1152.5 42.5 L1111 77.5 L1194.5 42.5 L1194.5 40 Z" fill="#fff" stroke="none"/>
<path d="M1152.3 43 L1111 77.5 L1194.8 43" stroke-width="1" fill="none"/>
<rect x="492.5" y="508.5" width="272" height="27.5" rx="6.5" ry="6.5" stroke-width="2" fill="#fff"/>
<path d="M595.8 534 L595.8 536.5 L578 555 L630.5 536.5 L630.5 534 Z" fill="#fff" stroke="none"/>
<path d="M595.5 536.8 L578 555 L631 536.8" stroke-width="1" fill="none"/>
<rect x="711.5" y="626.5" width="155.5" height="28" rx="6.5" ry="6.5" stroke-width="2" fill="#fff"/>
<path d="M713.5 634 L711 634 L627 638 L711 644 L713.5 644 Z" fill="#fff" stroke="none"/>
<path d="M710.8 633.8 L627 638 L710.8 644" stroke-width="1" fill="none"/>
<rect x="619.5" y="785.5" width="256" height="56" rx="11" ry="11" stroke-width="2" fill="#fff"/>
<path d="M621.5 805.8 L619 805.8 L387 819.8 L619 825.3 L621.5 825.3 Z" fill="#fff" stroke="none"/>
<path d="M618.8 805.6 L387 819.8 L618.8 825.4" stroke-width="1" fill="none"/>
</g>
<g font-family="'DejaVu Sans','Liberation Sans',sans-serif" font-weight="bold" fill="#0A9150" font-size="16.3px" stroke="#0A9150" stroke-width="0.6">
<text x="1058" y="35" textLength="265" lengthAdjust="spacingAndGlyphs">Todos endereços encontrados</text>
<text x="507" y="529" textLength="242" lengthAdjust="spacingAndGlyphs">Texto copiado da Wikipedia</text>
<text x="728" y="647.5" textLength="121" lengthAdjust="spacingAndGlyphs">Texto original</text>
<text x="635" y="808" textLength="223" lengthAdjust="spacingAndGlyphs">Ao mover o mouse: mostra</text>
<text x="640" y="827.5" textLength="214" lengthAdjust="spacingAndGlyphs">endereços a cada palavra</text>
</g>
</svg>
<div id="bb"></div>

</div>
</body></html>
